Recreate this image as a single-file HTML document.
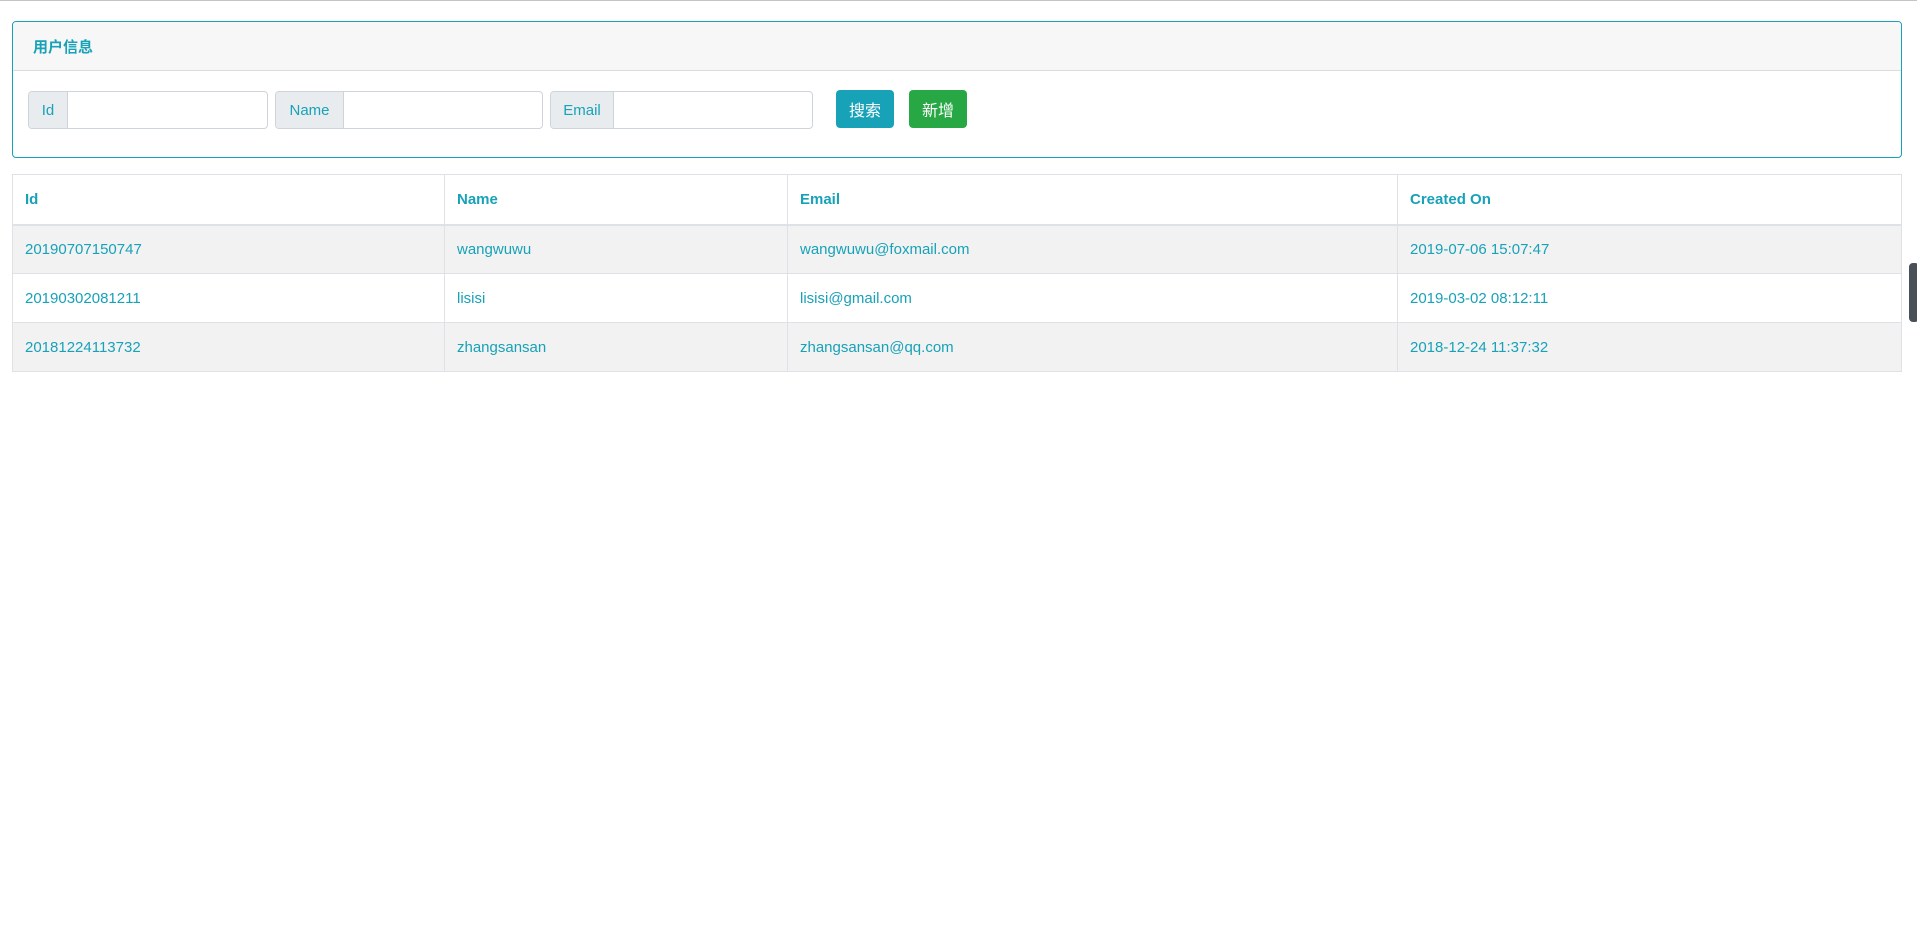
<!DOCTYPE html>
<html><head><meta charset="utf-8"><style>
*{box-sizing:border-box;margin:0;padding:0}
body{width:1917px;height:937px;background:#fff;font-family:"Liberation Sans","Noto Sans CJK SC",sans-serif;color:#17a2b8;position:relative;overflow:hidden}
.top{position:absolute;left:0;top:0;width:1917px;height:1px;background:#c4c4c4}
.card{position:absolute;left:12px;top:21px;width:1890px;height:137px;border:1px solid #17a2b8;border-radius:4px;overflow:hidden}
.ch{height:49px;background:#f7f7f7;border-bottom:1px solid #dcdcdc;font-weight:bold;font-size:15px;padding:14px 0 0 20px}
.grp{position:absolute;top:69px;height:38px;border:1px solid #ced4da;border-radius:4px;display:flex;overflow:hidden;background:#fff}
.grp span{background:#e9ecef;border-right:1px solid #ced4da;display:flex;align-items:center;justify-content:center;font-size:15px}
.btn{position:absolute;top:68px;height:38px;border-radius:4px;color:#fff;font-size:16px;display:flex;align-items:center;justify-content:center}
table{position:absolute;left:12px;top:174px;width:1890px;border-collapse:collapse;font-size:15px}
td,th{border:1px solid #dee2e6;padding:0 12px;text-align:left;height:49px}
th{font-weight:bold;border-bottom:2px solid #dee2e6;height:50px}
tr.s td{background:#f2f2f2}
.sw{position:absolute;left:1909px;top:263px;width:10px;height:59px;background:#4a5058;border-radius:4px}
</style></head><body>
<div class="top"></div>
<div class="card"><div class="ch">用户信息</div>
<div class="grp" style="left:15px;width:240px"><span style="width:39px">Id</span></div>
<div class="grp" style="left:262px;width:268px"><span style="width:68px">Name</span></div>
<div class="grp" style="left:537px;width:263px"><span style="width:63px">Email</span></div>
<div class="btn" style="left:823px;width:58px;background:#17a2b8">搜索</div>
<div class="btn" style="left:896px;width:58px;background:#28a745">新增</div>
</div>
<table>
<colgroup><col style="width:432px"><col style="width:343px"><col style="width:610px"><col></colgroup>
<tr><th>Id</th><th>Name</th><th>Email</th><th>Created On</th></tr>
<tr class="s"><td>20190707150747</td><td>wangwuwu</td><td>wangwuwu@foxmail.com</td><td>2019-07-06 15:07:47</td></tr>
<tr><td>20190302081211</td><td>lisisi</td><td>lisisi@gmail.com</td><td>2019-03-02 08:12:11</td></tr>
<tr class="s"><td>20181224113732</td><td>zhangsansan</td><td>zhangsansan@qq.com</td><td>2018-12-24 11:37:32</td></tr>
</table>
<div class="sw"></div>
</body></html>
